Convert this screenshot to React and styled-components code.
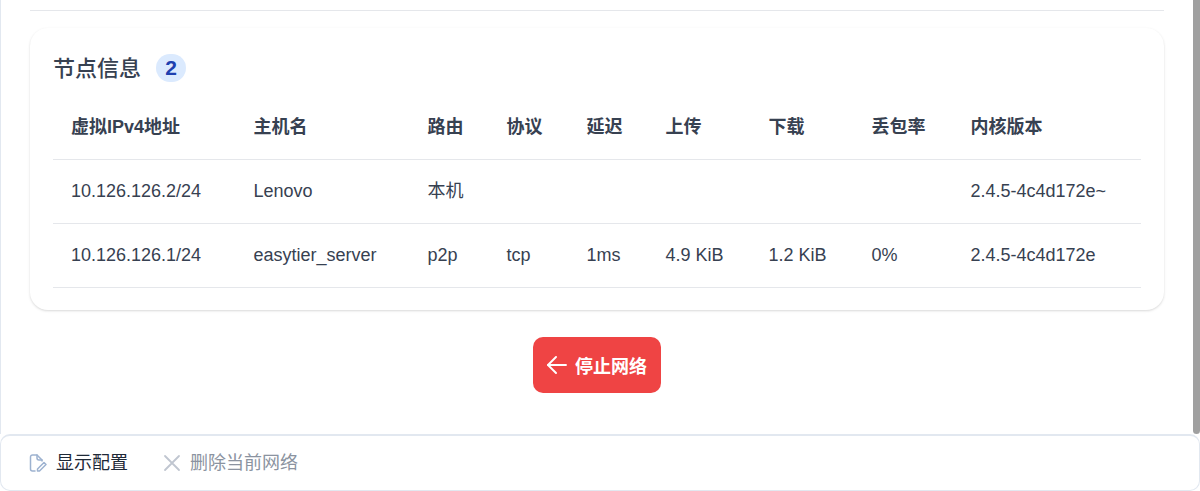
import React from 'react';
import styled, { createGlobalStyle } from 'styled-components';

const FONT = `"Liberation Sans", "Noto Sans CJK SC", sans-serif`;

const columns = [
  { title: '虚拟IPv4地址', width: 182.5 },
  { title: '主机名', width: 174 },
  { title: '路由', width: 79 },
  { title: '协议', width: 80 },
  { title: '延迟', width: 79 },
  { title: '上传', width: 103 },
  { title: '下载', width: 103 },
  { title: '丢包率', width: 99 },
  { title: '内核版本', width: 188.5 },
];

const peers = [
  ['10.126.126.2/24', 'Lenovo', '本机', '', '', '', '', '', '2.4.5-4c4d172e~'],
  ['10.126.126.1/24', 'easytier_server', 'p2p', 'tcp', '1ms', '4.9 KiB', '1.2 KiB', '0%', '2.4.5-4c4d172e'],
];

const GlobalStyle = createGlobalStyle`
  html, body {
    margin: 0;
    height: 100%;
    overflow: hidden;
    background: #fff;
  }
  * { box-sizing: border-box; }
`;

const Page = styled.div`
  position: relative;
  display: flex;
  flex-direction: column;
  height: 100vh;
  font-family: ${FONT};
  line-height: 1.5;
  color: #374151;
`;

const Content = styled.div`
  flex: 1;
  min-height: 0;
  padding: 10px 36px 0 29px;
  border-left: 1px solid #e2e8f0;
`;

const ScrollThumb = styled.div`
  position: absolute;
  top: 0;
  right: 0;
  width: 7px;
  height: 434px;
  background: #a0a0a0;
  border-radius: 0 0 4px 4px;
`;

const Rule = styled.div`
  height: 1px;
  background: #e5e7eb;
`;

const Card = styled.section`
  margin-top: 17px;
  height: 282px;
  padding: 24px 23px 0;
  background: #fff;
  border-radius: 18px;
  box-shadow: 0 1px 3px rgba(0, 0, 0, 0.1), 0 1px 2px rgba(0, 0, 0, 0.06);
`;

const CardTitle = styled.h2`
  display: flex;
  align-items: center;
  gap: 14px;
  height: 32px;
  margin: 0;
  font-size: 22px;
  font-weight: 500;
  color: #374151;
`;

const Badge = styled.span`
  width: 30px;
  height: 28px;
  margin-left: 1px;
  line-height: 28px;
  text-align: center;
  border-radius: 14px;
  background: #dbeafe;
  color: #1e40af;
  font-size: 21px;
  font-weight: 700;
`;

const Table = styled.table`
  width: 1088px;
  margin-top: 11px;
  border-collapse: collapse;
  table-layout: fixed;
  font-size: 18px;
`;

const Th = styled.th`
  height: 64px;
  padding: 2px 18px 0;
  text-align: left;
  font-weight: 700;
  color: #374151;
  border-bottom: 1px solid #e5e7eb;
`;

const Td = styled.td`
  height: 64px;
  padding: 0 18px;
  white-space: nowrap;
  color: #374151;
  border-bottom: 1px solid #e5e7eb;
`;

const Actions = styled.div`
  display: flex;
  justify-content: center;
  margin-top: 27px;
`;

const StopButton = styled.button`
  display: flex;
  align-items: center;
  gap: 8px;
  height: 56px;
  padding: 0 14px;
  border: none;
  border-radius: 10px;
  background: #ef4444;
  color: #fff;
  font-family: ${FONT};
  font-size: 18px;
  font-weight: 700;
`;

const Footer = styled.footer`
  display: flex;
  align-items: center;
  flex: none;
  height: 57px;
  padding: 0 28px;
  background: #fff;
  border: 1px solid #e2e8f0;
  border-top-width: 2px;
  border-radius: 10px;
`;

const MenuItem = styled.div`
  display: flex;
  align-items: center;
  gap: 9px;
  margin-right: 35px;
  font-size: 18px;
  color: ${(p) => (p.$disabled ? '#8b93a0' : '#1f2937')};
`;

const ItemIcon = styled.span`
  display: flex;
  color: ${(p) => (p.$disabled ? '#c0c6d0' : '#9db2d0')};
`;

const ArrowLeftIcon = () => (
  <svg width="20" height="18" viewBox="0 0 20 18" fill="none" stroke="currentColor" strokeWidth="1.9" strokeLinecap="round" strokeLinejoin="round">
    <path d="M1 9h18" />
    <path d="M9 1L1 9l8 8" />
  </svg>
);

const TimesIcon = () => (
  <svg width="18" height="18" viewBox="0 0 18 18" fill="none" stroke="currentColor" strokeWidth="1.8" strokeLinecap="round">
    <path d="M2 2l14 14M16 2L2 16" />
  </svg>
);

const FileEditIcon = () => (
  <svg width="18" height="18" viewBox="0 0 18 18" fill="none" stroke="currentColor" strokeWidth="1.5" strokeLinecap="round" strokeLinejoin="round">
    <path d="M6 17H3.5a2 2 0 0 1-2-2V3a2 2 0 0 1 2-2H8l5 5v1" />
    <path d="M8 1v3a2 2 0 0 0 2 2h3" />
    <path d="M15 8.5l2 2-6.5 6.5H8.5v-2z" />
  </svg>
);

export default function App() {
  return (
    <>
      <GlobalStyle />
      <Page>
        <Content>
          <Rule />
          <Card>
            <CardTitle>
              节点信息
              <Badge>2</Badge>
            </CardTitle>
            <Table>
              <colgroup>
                {columns.map((c) => (
                  <col key={c.title} style={{ width: c.width }} />
                ))}
              </colgroup>
              <thead>
                <tr>
                  {columns.map((c) => (
                    <Th key={c.title}>{c.title}</Th>
                  ))}
                </tr>
              </thead>
              <tbody>
                {peers.map((row) => (
                  <tr key={row[0]}>
                    {row.map((cell, i) => (
                      <Td key={i}>{cell}</Td>
                    ))}
                  </tr>
                ))}
              </tbody>
            </Table>
          </Card>
          <Actions>
            <StopButton>
              <ArrowLeftIcon />
              停止网络
            </StopButton>
          </Actions>
        </Content>
        <ScrollThumb />
        <Footer>
          <MenuItem>
            <ItemIcon><FileEditIcon /></ItemIcon>
            显示配置
          </MenuItem>
          <MenuItem $disabled>
            <ItemIcon $disabled><TimesIcon /></ItemIcon>
            删除当前网络
          </MenuItem>
        </Footer>
      </Page>
    </>
  );
}
